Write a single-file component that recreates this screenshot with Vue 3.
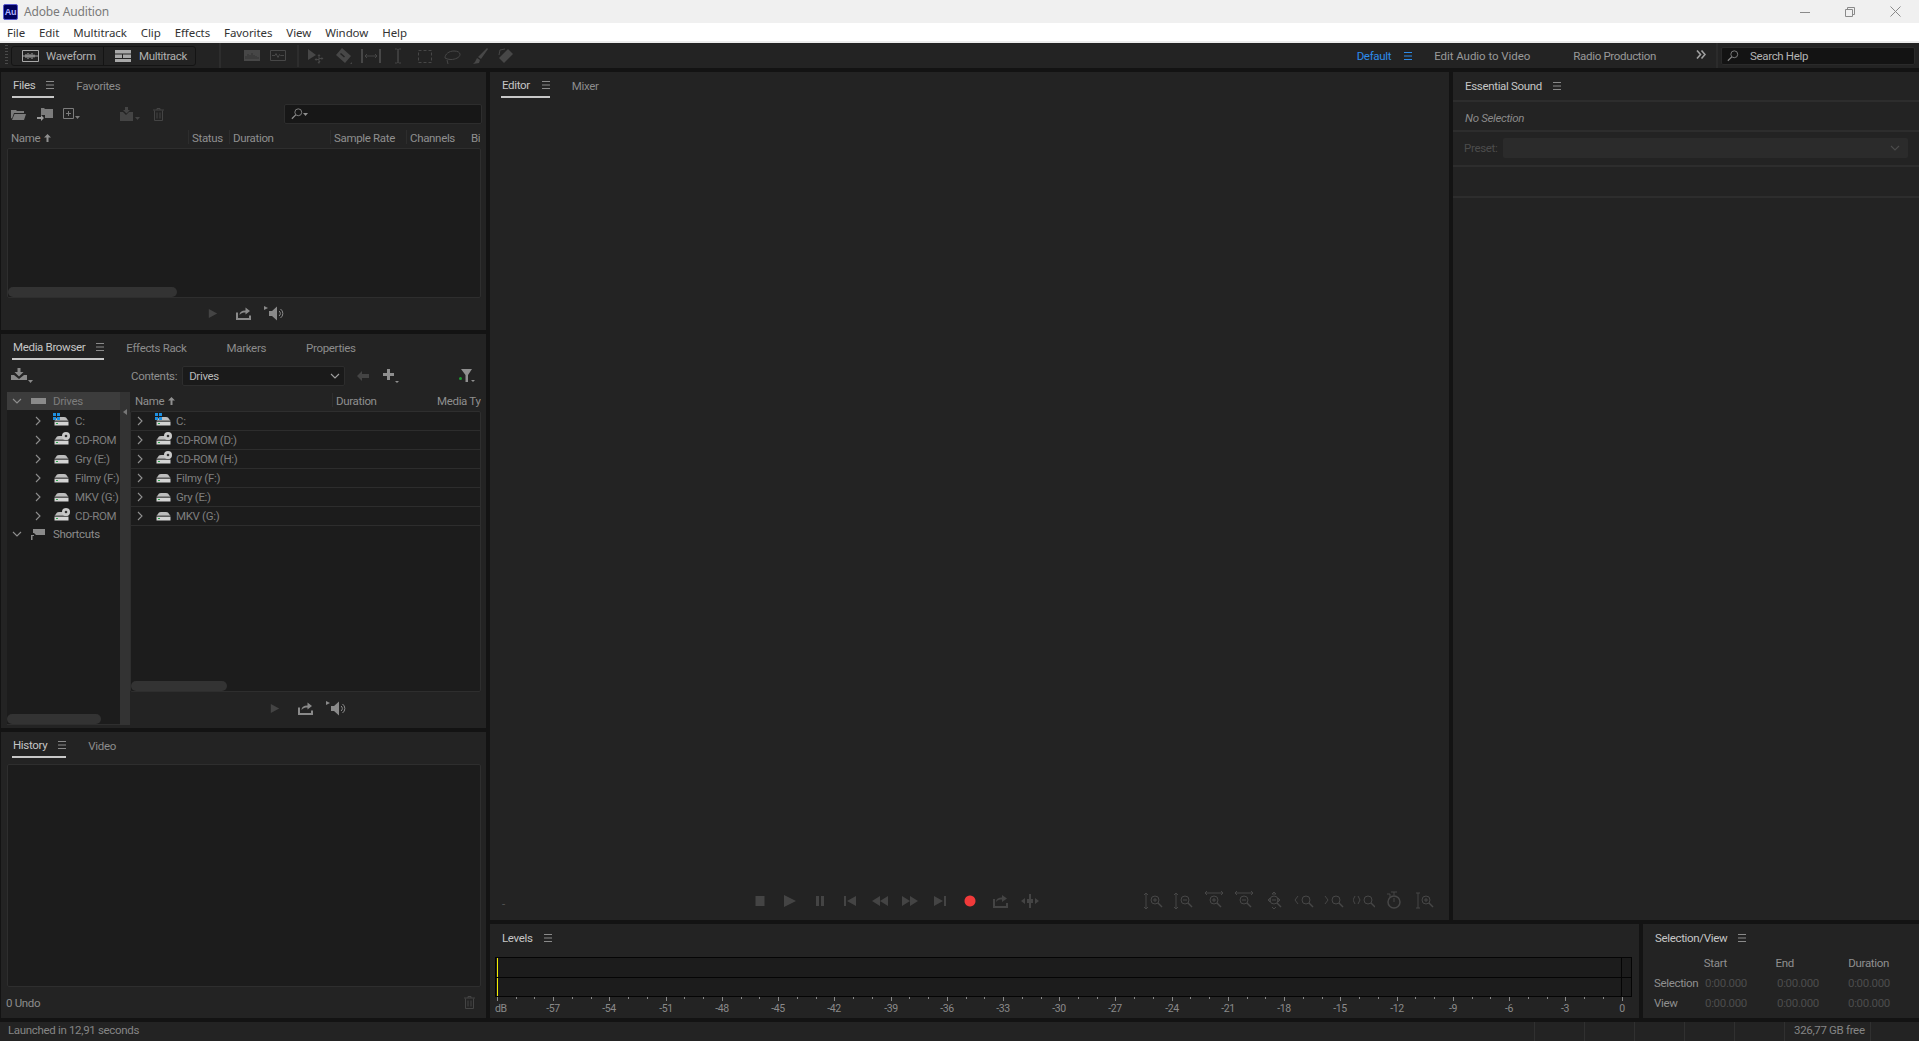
<template>
  <div class="app">
    <svg class="defs" aria-hidden="true">
      <symbol id="burger" viewBox="0 0 8 8"><path d="M0 .5h8M0 4h8M0 7.500h8" stroke="currentColor" fill="none" /></symbol>
      <symbol id="chev-r" viewBox="0 0 8 10"><path d="M2 1l4 4-4 4" stroke="currentColor" stroke-width="1.100" fill="none" /></symbol>
      <symbol id="chev-d" viewBox="0 0 10 8"><path d="M1 2l4 4 4-4" stroke="currentColor" stroke-width="1.100" fill="none" /></symbol>
      <symbol id="drive" viewBox="0 0 15 10">
        <path d="M3 1.500Q3.500 1 5 1h5q1.500 0 2 .5L14.500 5H.5z" fill="#bdbdbd" />
        <path d="M.5 5.500h14V9.500H.5z" fill="#d4d4d4" />
        <path d="M0 5h15" stroke="#333" stroke-width=".8" />
        <path d="M2 7h2v1H2z" fill="#2fa84f" />
      </symbol>
      <symbol id="disc" viewBox="0 0 8 8">
        <circle cx="4" cy="4" r="4" fill="#c9c9c9" />
        <circle cx="4" cy="4" r="1.300" fill="#333" />
      </symbol>
      <symbol id="win" viewBox="0 0 7 7"><path d="M0 0h3v3H0zM4 0h3v3H4zM0 4h3v3H0zM4 4h3v3H4z" fill="#1e8fe0" /></symbol>
      <symbol id="play" viewBox="0 0 12 12"><path d="M1 .5l10 5.500-10 5.500z" fill="currentColor" /></symbol>
      <symbol id="loop" viewBox="0 0 15 13">
        <path d="M1 5.500V12h13V8.500" stroke="currentColor" stroke-width="2" fill="none" />
        <path d="M3.500 8c0-3 2-4.500 6-4.500V.5L14 4 9.500 7.500V5.500C7 5.500 5 6 3.500 8z" fill="currentColor" />
      </symbol>
      <symbol id="speaker" viewBox="0 0 20 15">
        <path d="M0 0l4 2-4 2z" fill="currentColor" />
        <path d="M5 5h3l5-4.500v14L8 10H5z" fill="currentColor" />
        <path d="M15 5a3 3 0 0 1 0 5M16.500 3a5.500 5.500 0 0 1 0 9" stroke="currentColor" fill="none" />
      </symbol>
      <symbol id="caret" viewBox="0 0 5 3"><path d="M0 0h5L2.500 3z" fill="currentColor" /></symbol>
      <symbol id="trash" viewBox="0 0 11 13">
        <path d="M0 2h11M4 2V.5h3V2M1.500 2.500v10h8v-10M4 4.500v6M7 4.500v6" stroke="currentColor" fill="none" />
      </symbol>
      <symbol id="sort-up" viewBox="0 0 7 8"><path d="M3.500 0L7 3.500H4.500V8h-2V3.500H0z" fill="currentColor" /></symbol>
      <symbol id="find" viewBox="0 0 14 14">
        <circle cx="8.500" cy="5" r="4" stroke="currentColor" fill="none" />
        <path d="M5.500 8L1 12.500" stroke="currentColor" stroke-width="1.400" />
      </symbol>
    </svg>

    <header class="titlebar">
      <div class="logo">Au</div>
      <span class="title">Adobe Audition</span>
      <div class="winctl">
        <svg width="10" height="10" viewBox="0 0 10 10"><path d="M0 5.500h10" stroke="#8a8a8a" /></svg>
        <svg width="10" height="10" viewBox="0 0 10 10"><path d="M.5 2.500h7v7h-7zM2.500 2.500V.5h7v7h-2" stroke="#8a8a8a" fill="none" /></svg>
        <svg width="11" height="11" viewBox="0 0 11 11"><path d="M.5.500l10 10M10.500.500l-10 10" stroke="#8a8a8a" /></svg>
      </div>
    </header>

    <nav class="menubar">
      <span v-for="m in menus" :key="m">{{ m }}</span>
    </nav>

    <div class="toolbar">
      <div class="grip"></div>
      <div class="modes">
        <div class="mode">
          <svg width="17" height="12" viewBox="0 0 17 12"><path d="M.5.500h16v11H.5zM1 6h15M4 4v4M6 3v6M8 4v4M10 3v6M12 4.500v3" stroke="#a8a8a8" fill="none" /></svg>
          Waveform
        </div>
        <div class="mode mode-r">
          <svg width="16" height="12" viewBox="0 0 16 12"><path d="M0 0h16v3.500H0zM0 4.500h7V8H0zM8 4.500h8V8H8zM0 9h16v3H0z" fill="#a8a8a8" /></svg>
          Multitrack
        </div>
      </div>
      <div class="tsep first"></div>
      <svg class="tview" width="16" height="11" viewBox="0 0 16 11"><path d="M0 0h16v11H0z" fill="#474747" /><path d="M2 9V6M4 9V4M6 9V5M8 9V3M10 9V5M12 9V6M14 9V7" stroke="#333" /></svg>
      <svg class="tview" width="16" height="11" viewBox="0 0 16 11"><path d="M.5.500h15v10H.5zM2 5.500h3l1-2 2 4 1.500-3 1 1H14" stroke="#474747" fill="none" /></svg>
      <div class="tsep second"></div>
      <div class="tools">
        <svg v-for="(t, i) in tools" :key="i" width="20" height="18" viewBox="0 0 20 18">
          <path v-if="t.fill" :d="t.fill" fill="#474747" fill-rule="evenodd" />
          <path v-if="t.line" :d="t.line" stroke="#474747" fill="none" :stroke-dasharray="t.dash" />
        </svg>
      </div>
      <div class="workspaces">
        <span class="ws-active">Default</span>
        <svg class="ws-burger" width="8" height="8"><use href="#burger" /></svg>
        <span class="ws ws-edit">Edit Audio to Video</span>
        <span class="ws ws-radio">Radio Production</span>
        <svg class="more" width="10" height="9" viewBox="0 0 10 9"><path d="M1 .5l3.500 4L1 8.500M5.500 .5l3.500 4-3.500 4" stroke="#a0a0a0" stroke-width="1.600" fill="none" /></svg>
        <div class="tsep help"></div>
        <div class="searchhelp">
          <svg width="12" height="12"><use href="#find" /></svg>
          <span>Search Help</span>
        </div>
      </div>
    </div>

    <main class="workspace">
      <section class="leftcol">
        <div class="panel files">
          <div class="tabs">
            <div class="tab on">Files<svg width="8" height="8"><use href="#burger" /></svg></div>
            <div class="tab next">Favorites</div>
          </div>
          <div class="files-tools">
            <svg class="ic11" width="15" height="11" viewBox="0 0 15 11"><path d="M0 1h5l1 1h7v2H3L1 9.500 0 9zM3.500 5H15l-2 6H1z" fill="#7c7c7c" /></svg>
            <svg class="ic11 s2" width="17" height="13" viewBox="0 0 17 13"><path d="M4 0h3l1 1h8v9H8V7H4z" fill="#7c7c7c" /><path d="M0 9h4V7l3 3-3 3v-2H0z" fill="#9a9a9a" /></svg>
            <svg class="ic11 s3" width="17" height="12" viewBox="0 0 17 12"><path d="M.5.500h10v10H.5zM5.500 3v5M3 5.500h5" stroke="#7c7c7c" fill="none" /><path d="M12 8h5l-2.500 3z" fill="#7c7c7c" /></svg>
            <svg class="ic11 s4" width="20" height="14" viewBox="0 0 20 14"><path d="M5 0h3v3h2L6.500 6.500 3 3h2zM0 5h3l3 3 3-3h4v9H0z" fill="#444" /><path d="M15 10h5l-2.500 3z" fill="#444" /></svg>
            <svg class="ic11 s5" width="11" height="13"><use href="#trash" color="#444" /></svg>
            <div class="searchbox">
              <svg width="12" height="12"><use href="#find" color="#8f8f8f" /></svg>
              <svg width="5" height="3"><use href="#caret" color="#8f8f8f" /></svg>
            </div>
          </div>
          <div class="thead files-head">
            <span class="c-name">Name <svg width="7" height="8"><use href="#sort-up" /></svg></span>
            <span class="c-status">Status</span>
            <span class="c-dur">Duration</span>
            <span class="c-rate">Sample Rate</span>
            <span class="c-chan">Channels</span>
            <span class="c-bit">Bi</span>
          </div>
          <div class="listbox grow">
            <div class="thumb files-thumb"></div>
          </div>
          <div class="players files-players">
            <svg width="10" height="11"><use href="#play" color="#444" /></svg>
            <svg width="15" height="13"><use href="#loop" color="#8a8a8a" /></svg>
            <svg width="20" height="15"><use href="#speaker" color="#8a8a8a" /></svg>
          </div>
        </div>

        <div class="panel media">
          <div class="tabs">
            <div class="tab on">Media Browser<svg width="8" height="8"><use href="#burger" /></svg></div>
            <div class="tab next">Effects Rack</div>
            <div class="tab later">Markers</div>
            <div class="tab later">Properties</div>
          </div>
          <div class="media-tools">
            <svg class="ingest" width="22" height="15" viewBox="0 0 22 15"><path d="M6.500 0h3v4h3L8 8.500 3.500 4h3zM0 7h3l5 4 5-4h3v5H0z" fill="#8a8a8a" /><path d="M17 12h5l-2.500 3z" fill="#8a8a8a" /></svg>
            <span class="contents">Contents:</span>
            <div class="select">
              <span>Drives</span>
              <svg width="10" height="8"><use href="#chev-d" /></svg>
            </div>
            <svg class="back" width="12" height="10" viewBox="0 0 12 10"><path d="M0 5l5-5v3h7v4H5v3z" fill="#444" /></svg>
            <svg class="plus" width="16" height="14" viewBox="0 0 16 14"><path d="M4 0h3v4h4v3H7v4H4V7H0V4h4z" fill="#8f8f8f" /><path d="M12 12h4l-2 2z" fill="#8f8f8f" /></svg>
            <svg class="filter" width="16" height="14" viewBox="0 0 16 14"><circle cx="1.500" cy="9.500" r="1.500" fill="#1f9a32" /><path d="M2 0h11L9 6v7H6.500V6z" fill="#8f8f8f" /><path d="M12 11h4l-2 2z" fill="#8f8f8f" /></svg>
          </div>
          <div class="browser">
            <div class="tree">
              <div class="root sel">
                <svg class="cd" width="10" height="8"><use href="#chev-d" /></svg>
                <svg class="rooticon" width="15" height="6" viewBox="0 0 15 6"><path d="M0 0h15v6H0z" fill="#8a8a8a" /></svg>
                <span>Drives</span>
              </div>
              <div v-for="d in treeDrives" :key="d.key" class="item">
                <svg class="cr" width="8" height="10"><use href="#chev-r" /></svg>
                <span class="drive-ic">
                  <svg class="d" width="15" height="10"><use href="#drive" /></svg>
                  <svg v-if="d.win" class="w" width="7" height="7"><use href="#win" /></svg>
                  <svg v-if="d.disc" class="c" width="8" height="8"><use href="#disc" /></svg>
                </span>
                <span>{{ d.name }}</span>
              </div>
              <div class="root">
                <svg class="cd" width="10" height="8"><use href="#chev-d" /></svg>
                <svg class="rooticon sc" width="14" height="11" viewBox="0 0 14 11"><path d="M2 0h12v6H5L3 4H2zM0 6h3v1H1.500v4H0z" fill="#8a8a8a" /></svg>
                <span>Shortcuts</span>
              </div>
              <div class="thumb tree-thumb"></div>
            </div>
            <div class="splitter">
              <svg class="sp-arrow" width="4" height="6" viewBox="0 0 4 6"><path d="M4 0v6L0 3z" fill="#777" /></svg>
              <div class="sp-dots"></div>
            </div>
            <div class="listcol">
              <div class="thead media-head">
                <span class="m-name">Name <svg width="7" height="8"><use href="#sort-up" /></svg></span>
                <span class="m-dur">Duration</span>
                <span class="m-type">Media Ty</span>
              </div>
              <div class="listbox grow">
                <div v-for="d in listDrives" :key="d.name" class="row">
                  <svg class="cr" width="8" height="10"><use href="#chev-r" /></svg>
                  <span class="drive-ic">
                    <svg class="d" width="15" height="10"><use href="#drive" /></svg>
                    <svg v-if="d.win" class="w" width="7" height="7"><use href="#win" /></svg>
                    <svg v-if="d.disc" class="c" width="8" height="8"><use href="#disc" /></svg>
                  </span>
                  <span>{{ d.name }}</span>
                </div>
                <div class="thumb list-thumb"></div>
              </div>
              <div class="players media-players">
                <svg width="10" height="11"><use href="#play" color="#444" /></svg>
                <svg width="15" height="13"><use href="#loop" color="#8a8a8a" /></svg>
                <svg width="20" height="15"><use href="#speaker" color="#8a8a8a" /></svg>
              </div>
            </div>
          </div>
        </div>

        <div class="panel history">
          <div class="tabs">
            <div class="tab on">History<svg width="8" height="8"><use href="#burger" /></svg></div>
            <div class="tab next">Video</div>
          </div>
          <div class="listbox grow history-box"></div>
          <div class="undo">
            <span>0 Undo</span>
            <svg width="11" height="13"><use href="#trash" color="#444" /></svg>
          </div>
        </div>
      </section>

      <section class="rightarea">
        <div class="toprow">
          <div class="panel editor">
            <div class="tabs">
              <div class="tab on">Editor<svg width="8" height="8"><use href="#burger" /></svg></div>
              <div class="tab next">Mixer</div>
            </div>
            <div class="canvas"></div>
            <div class="transport">
              <span class="dash">-</span>
              <div class="slots tp">
                <svg v-for="(t, i) in transport" :key="i" width="20" height="14" viewBox="0 0 20 14">
                  <path v-if="t.fill" :d="t.fill" :fill="t.color || '#444'" />
                  <path v-if="t.line" :d="t.line" stroke="#444" stroke-width="2" fill="none" />
                </svg>
              </div>
              <div class="slots zm">
                <svg v-for="(z, i) in zooms" :key="i" width="22" height="20" viewBox="0 0 22 20">
                  <circle :cx="z.cx" :cy="z.cy || 9" :r="z.r || 4" stroke="#474747" :stroke-width="z.r ? 1.500 : 1" fill="none" />
                  <path v-if="!z.r" :d="`M${z.cx + 3} 12l4 4`" stroke="#474747" stroke-width="1.500" />
                  <path :d="z.d" stroke="#474747" fill="none" />
                </svg>
              </div>
            </div>
          </div>
          <div class="panel essential">
            <div class="tabs es-tabs">
              <div class="tab plain">Essential Sound<svg width="8" height="8"><use href="#burger" /></svg></div>
            </div>
            <div class="es-none">No Selection</div>
            <div class="es-preset">
              <span>Preset:</span>
              <div class="es-select"><svg width="10" height="8"><use href="#chev-d" /></svg></div>
            </div>
            <div class="es-empty"></div>
          </div>
        </div>

        <div class="bottomrow">
          <div class="panel levels">
            <div class="tabs flat">
              <div class="tab plain">Levels<svg width="8" height="8"><use href="#burger" /></svg></div>
            </div>
            <div class="meter">
              <div class="m-ch"><i class="peak"></i><b></b></div>
              <div class="m-ch"><i class="peak"></i><b></b></div>
            </div>
            <div class="ruler">
              <i v-for="t in ticks" :key="t.x" :class="{ major: t.major }" :style="{ left: t.x + 'px' }"></i>
              <span v-for="l in labels" :key="l.text" :style="{ left: l.x + 'px' }">{{ l.text }}</span>
            </div>
          </div>
          <div class="panel selview">
            <div class="tabs flat">
              <div class="tab plain">Selection/View<svg width="8" height="8"><use href="#burger" /></svg></div>
            </div>
            <div class="sv-grid">
              <span></span><span class="h h1">Start</span><span class="h h2">End</span><span class="h h3">Duration</span>
              <span>Selection</span><span class="v">0:00.000</span><span class="v">0:00.000</span><span class="v">0:00.000</span>
              <span>View</span><span class="v">0:00.000</span><span class="v">0:00.000</span><span class="v">0:00.000</span>
            </div>
          </div>
        </div>
      </section>
    </main>

    <footer class="statusbar">
      <span class="launched">Launched in 12,91 seconds</span>
      <div class="cells">
        <i></i><i></i><i></i><i></i><i></i>
        <span>326,77 GB free</span>
      </div>
    </footer>
  </div>
</template>

<script setup>
const menus = ['File', 'Edit', 'Multitrack', 'Clip', 'Effects', 'Favorites', 'View', 'Window', 'Help']

const tools = [
  { fill: 'M1 2l8 6-8 5zM12 7l1.500 2h-1v2h2v-1l2 1.500-2 1.500v-1h-2v2h1L12 17l-1.500-2h1v-2h-2v1l-2-1.500 2-1.500v1h2V9h-1z' },
  { fill: 'M2 8l6-7 9 8-6 7zM7 6L6 7l4 3.500 1-1zM18 15v2h-2z' },
  { fill: 'M0 2h2v14H0zM18 2h2v14h-2z', line: 'M4 9h12M6 7L4 9l2 2M14 7l2 2-2 2' },
  { line: 'M7 2h1.500q1.500 0 1.500 1.500v11q0 1.500 1.500 1.500H13M13 2h-1.500q-1.500 0-1.500 1.500v11q0 1.500-1.500 1.500H7' },
  { line: 'M3.500 3.500h13v12h-13z', dash: '3 2' },
  { line: 'M3 11c0-4 4-7 9-7 4 0 6 1.500 6 3.500 0 3-5 5-9 5-3 0-5-1-6-1.500M5 13l1 4' },
  { fill: 'M18 1l1 1-7 10-3-2zM8 11l3 2-1 3-6 1 2-2z' },
  { fill: 'M12 2l5 5-9 9-5-5z', line: 'M3 8l1-5 5-1' },
]

const transport = [
  { fill: 'M5.500 2h9v10h-9z' },
  { fill: 'M4 1l12 6-12 6z' },
  { fill: 'M6 2h3v10H6zM11 2h3v10h-3z' },
  { fill: 'M4 2h2v10H4zM16 2v10L7 7z' },
  { fill: 'M2 7l8-5v10zM10 7l8-5v10z' },
  { fill: 'M2 2l8 5-8 5zM10 2l8 5-8 5z' },
  { fill: 'M4 2l9 5-9 5zM14 2h2v10h-2z' },
  { fill: 'M10 1.500a5.500 5.500 0 1 0 .01 0z', color: '#f03a3a' },
  { fill: 'M6 8c0-3 2-4.500 6-4.500V1l5 3.500L12 8V5.500C9.500 5.500 7.500 6 6 8z', line: 'M4 5v8h13V9' },
  { fill: 'M1 7l4-3v6zM19 7l-4-3v6zM7 5h6v4H7z', line: 'M10 0v14' },
]

const zooms = [
  { cx: 12, d: 'M3 2v16M1 4l2-2 2 2M1 16l2 2 2-2M10 9h4M12 7v4' },
  { cx: 12, d: 'M3 2v16M1 4l2-2 2 2M1 16l2 2 2-2M10 9h4' },
  { cx: 11, d: 'M2 2h18M4 0L2 2l2 2M18 0l2 2-2 2M9 9h4M11 7v4' },
  { cx: 11, d: 'M2 2h18M4 0L2 2l2 2M18 0l2 2-2 2M9 9h4' },
  { cx: 11, d: 'M5 9l2-2v4zM17 9l-2-2v4zM11 1l2 2H9zM9 9h4M9 16l2 2 2-2' },
  { cx: 13, d: 'M5 5L2 9l3 4' },
  { cx: 13, d: 'M2 5l3 4-3 4' },
  { cx: 15, d: 'M2 5L0 9l2 4M5 5l2 4-2 4' },
  { cx: 11, cy: 11, r: 6, d: 'M8 1h6M11 1v3M4 3l3 0 0 3M11 11V7' },
  { cx: 13, d: 'M3 2h4M5 2v15M3 17h4M11 9h4M13 7v4' },
]

const treeDrives = [
  { key: 'c', name: 'C:', win: true },
  { key: 'd', name: 'CD-ROM', disc: true },
  { key: 'e', name: 'Gry (E:)' },
  { key: 'f', name: 'Filmy (F:)' },
  { key: 'g', name: 'MKV (G:)' },
  { key: 'h', name: 'CD-ROM', disc: true },
]

const listDrives = [
  { name: 'C:', win: true },
  { name: 'CD-ROM (D:)', disc: true },
  { name: 'CD-ROM (H:)', disc: true },
  { name: 'Filmy (F:)' },
  { name: 'Gry (E:)' },
  { name: 'MKV (G:)' },
]

// one tick per dB, -60 to 0, every third one is a major tick
const step = 1124.5 / 60
const ticks = Array.from({ length: 61 }, (_, i) => ({ x: Math.round(i * step), major: i % 3 === 0 }))
const labels = Array.from({ length: 21 }, (_, i) => ({
  x: Math.round(i * step * 3),
  text: i === 0 ? 'dB' : String(-60 + i * 3),
}))
</script>

<style>
html, body {
  margin: 0;
  background: #131313;
  overflow: hidden;
}
</style>

<style scoped>
.app {
  width: 1919px;
  height: 1041px;
  display: flex;
  flex-direction: column;
  background: #131313;
  font-family: Roboto, "Liberation Sans", sans-serif;
  font-size: 11.5px;
  letter-spacing: -0.33px;
  color: #8c8c8c;
}
.defs {
  position: absolute;
  width: 0;
  height: 0;
}
svg {
  flex: none;
  display: block;
}

.titlebar {
  height: 23px;
  flex: none;
  background: #f0f0f0;
  display: flex;
  align-items: center;
  font-family: "Noto Sans", sans-serif;
  font-size: 12px;
  letter-spacing: -0.15px;
  color: #7a7a7a;
}
.logo {
  width: 15px;
  height: 16px;
  margin-left: 3px;
  box-sizing: border-box;
  background: #00005b;
  border: 1px solid #5a5ad0;
  border-radius: 2px;
  color: #b0b0ff;
  font-size: 9px;
  font-weight: 700;
  line-height: 14px;
  text-align: center;
  font-family: "Liberation Sans", sans-serif;
}
.title {
  margin-left: 6px;
}
.winctl {
  margin-left: auto;
  margin-right: 18px;
  display: flex;
  align-items: center;
  gap: 35px;
}

.menubar {
  height: 18px;
  flex: none;
  background: #fff;
  border-bottom: 2px solid #ececec;
  display: flex;
  align-items: center;
  gap: 14px;
  padding-left: 7px;
  font-family: "Noto Sans", sans-serif;
  font-size: 11.5px;
  letter-spacing: -0.09px;
  color: #333;
}

.toolbar {
  height: 25px;
  flex: none;
  background: #232323;
  display: flex;
  align-items: center;
}
.grip {
  width: 3px;
  height: 21px;
  margin-left: 5px;
  background: repeating-linear-gradient(#4a4a4a 0 1px, transparent 1px 3px);
}
.modes {
  display: flex;
  height: 20px;
  margin-left: 3px;
  box-sizing: border-box;
  border: 1px solid #141414;
  border-radius: 3px;
  color: #b0b0b0;
}
.mode {
  display: flex;
  align-items: center;
  gap: 7px;
  padding: 0 6px 0 10px;
  width: 91px;
  box-sizing: border-box;
}
.mode-r {
  border-left: 1px solid #141414;
  width: 92px;
  padding-left: 11px;
  gap: 8px;
}
.tsep {
  width: 2px;
  height: 25px;
  background: #2d2d2d;
  flex: none;
}
.tsep.first {
  margin-left: 23px;
}
.tview {
  margin-left: 10px;
}
.tsep.first + .tview {
  margin-left: 23px;
}
.tsep.second {
  margin-left: 11px;
  height: 22px;
}
.tools {
  display: flex;
  gap: 7px;
  margin-left: 8px;
}
.workspaces {
  margin-left: auto;
  display: flex;
  align-items: center;
  height: 100%;
}
.ws-active {
  color: #2d8ceb;
}
.ws-burger {
  color: #2d8ceb;
  margin-left: 13px;
}
.ws {
  color: #999;
}
.ws-edit {
  margin-left: 22px;
  letter-spacing: -0.05px;
}
.ws-radio {
  margin-left: 43px;
}
.more {
  margin-left: 40px;
  margin-top: -2px;
}
.tsep.help {
  margin-left: 10px;
  background: #2b2b2b;
}
.searchhelp {
  width: 194px;
  height: 18px;
  box-sizing: border-box;
  margin: 1px 4px 0 3px;
  background: #131313;
  border: 1px solid #2a2a2a;
  border-radius: 2px;
  display: flex;
  align-items: center;
  padding-left: 5px;
  gap: 11px;
  color: #b4b4b4;
}
.searchhelp svg {
  color: #8a8a8a;
}

.workspace {
  flex: 1;
  display: grid;
  grid-template-columns: 485px 1fr;
  gap: 4px;
  padding: 4px 0 2px 1px;
  min-height: 0;
}
.leftcol {
  display: grid;
  grid-template-rows: 258px 394px 286px;
  gap: 4px;
  min-height: 0;
}
.rightarea {
  display: grid;
  grid-template-rows: 848px 94px;
  gap: 4px;
  min-width: 0;
}
.toprow {
  display: grid;
  grid-template-columns: 959px 1fr;
  gap: 4px;
  min-height: 0;
}
.bottomrow {
  display: grid;
  grid-template-columns: 1149px 1fr;
  gap: 4px;
}
.panel {
  background: #232323;
  display: flex;
  flex-direction: column;
  min-height: 0;
  min-width: 0;
  position: relative;
}

.tabs {
  height: 26px;
  flex: none;
  display: flex;
  padding-left: 11px;
}
.tab {
  display: flex;
  align-items: center;
  gap: 11px;
  height: 26px;
  box-sizing: border-box;
  white-space: nowrap;
  padding-top: 2px;
  color: #8c8c8c;
}
.tab.on {
  color: #c6c6c6;
  border-bottom: 2px solid #c8c8c8;
  padding-left: 1px;
}
.editor .tab.on {
  gap: 12px;
}
.tab.plain {
  color: #c6c6c6;
}
.tab svg {
  color: #8a8a8a;
}
.tab.next {
  margin-left: 22px;
}
.tab.later {
  margin-left: 40px;
}
.es-tabs {
  box-sizing: border-box;
  height: 30px;
  border-bottom: 2px solid #2d2d2d;
  padding-left: 12px;
}
.flat {
  padding-left: 12px;
}

.files-tools {
  height: 30px;
  flex: none;
  box-sizing: border-box;
  padding-top: 2px;
  display: flex;
  align-items: center;
}
.files-tools .ic11 {
  margin-left: 10px;
}
.files-tools .s2 {
  margin-left: 11px;
}
.files-tools .s3 {
  margin-left: 9px;
}
.files-tools .s4 {
  margin-left: 40px;
}
.files-tools .s5 {
  margin-left: 13px;
}
.searchbox {
  margin-left: 120px;
  width: 198px;
  height: 20px;
  box-sizing: border-box;
  background: #171717;
  border: 1px solid #2d2d2d;
  border-radius: 2px;
  display: flex;
  align-items: center;
  padding-left: 6px;
}

.thead {
  display: flex;
  align-items: center;
  height: 20px;
  flex: none;
  position: relative;
  color: #8f8f8f;
}
.thead span {
  position: absolute;
  top: 3px;
  white-space: nowrap;
  display: flex;
  align-items: center;
  gap: 4px;
}
.thead span + span::before {
  content: "";
  position: absolute;
  left: -4px;
  top: -1px;
  height: 14px;
  width: 1px;
  background: #2d2d2d;
}
.c-name { left: 10px; }
.c-status { left: 191px; }
.c-dur { left: 232px; }
.c-rate { left: 333px; }
.c-chan { left: 409px; }
.c-bit { left: 470px; width: 9px; overflow: hidden; }
.m-name { left: 5px; }
.m-dur { left: 206px; }
.m-type { left: 307px; width: 44px; overflow: hidden; }
.m-type::before { display: none; }

.listbox {
  margin: 0 5px 0 6px;
  background: #1c1c1c;
  border: 1px solid #2e2e2e;
  border-radius: 2px;
  position: relative;
  overflow: hidden;
}
.grow {
  flex: 1;
  min-height: 0;
}
.thumb {
  position: absolute;
  left: 0;
  height: 10px;
  background: #333;
  border-radius: 5px;
  bottom: 0;
}
.files-thumb { width: 169px; }
.list-thumb { width: 96px; }
.tree-thumb { width: 94px; }

.players {
  height: 32px;
  flex: none;
  display: flex;
  align-items: center;
  padding-left: 207px;
}
.files-players {
  box-sizing: border-box;
  padding-bottom: 2px;
}
.players svg:nth-child(2) {
  margin-left: 18px;
}
.players svg:nth-child(3) {
  margin-left: 13px;
}
.media-players {
  height: 33px;
  padding-left: 140px;
}

.media-tools {
  height: 32px;
  flex: none;
  display: flex;
  align-items: center;
  padding-bottom: 1px;
  box-sizing: border-box;
}
.ingest {
  margin-left: 10px;
}
.contents {
  margin-left: 98px;
  color: #8f8f8f;
}
.select {
  margin-left: 5px;
  width: 163px;
  height: 20px;
  box-sizing: border-box;
  background: #1a1a1a;
  border: 1px solid #2d2d2d;
  border-radius: 2px;
  display: flex;
  align-items: center;
  justify-content: space-between;
  padding: 0 4px 0 6px;
  color: #b8b8b8;
}
.select svg {
  color: #a0a0a0;
}
.back {
  margin-left: 12px;
}
.plus {
  margin-left: 14px;
}
.filter {
  margin-left: 60px;
}

.browser {
  flex: 1;
  display: flex;
  min-height: 0;
  padding: 0 5px 3px 6px;
}
.tree {
  width: 113px;
  flex: none;
  background: #1c1c1c;
  position: relative;
  overflow: hidden;
  border-bottom: 1px solid #2e2e2e;
  box-sizing: border-box;
  white-space: nowrap;
}
.root {
  height: 18px;
  display: flex;
  align-items: center;
  padding-left: 5px;
}
.root.sel {
  background: #3c3c3c;
  color: #7d7d7d;
}
.rooticon {
  margin-left: 9px;
  margin-right: 7px;
}
.rooticon.sc {
  margin-right: 8px;
}
.item {
  height: 19px;
  display: flex;
  align-items: center;
  padding-left: 27px;
  color: #7f7f7f;
}
.item .drive-ic {
  margin-left: 12px;
  margin-right: 6px;
}
.root + .item {
  margin-top: 1px;
}
.cr,
.cd {
  color: #8f8f8f;
}
.drive-ic {
  width: 15px;
  height: 14px;
  position: relative;
  flex: none;
}
.drive-ic .d {
  position: absolute;
  left: 0;
  bottom: 2px;
}
.drive-ic .w {
  position: absolute;
  left: -1px;
  top: -1px;
}
.drive-ic .c {
  position: absolute;
  right: -1px;
  top: -1px;
}
.splitter {
  width: 10px;
  flex: none;
  background: #333;
  position: relative;
}
.sp-arrow {
  position: absolute;
  left: 3px;
  top: 17px;
}
.sp-dots {
  position: absolute;
  left: 4px;
  top: 153px;
  width: 3px;
  height: 27px;
  background-image: radial-gradient(#6a6a6a 0.6px, transparent 0.7px);
  background-size: 2px 2px;
}
.listcol {
  flex: 1;
  display: flex;
  flex-direction: column;
  min-width: 0;
}
.listcol .listbox {
  margin: 0;
}
.media-head {
  height: 19px;
}
.media-head span {
  top: 2px;
}
.row {
  height: 19px;
  box-sizing: border-box;
  border-bottom: 1px solid #2d2d2d;
  display: flex;
  align-items: center;
  padding-left: 5px;
  color: #7f7f7f;
}
.row .drive-ic {
  margin-left: 12px;
  margin-right: 5px;
}

.history-box {
  flex: 1;
  margin-top: 6px;
}
.undo {
  height: 31px;
  flex: none;
  display: flex;
  align-items: center;
  justify-content: space-between;
  padding: 0 11px 0 5px;
}

.canvas {
  flex: 1;
}
.transport {
  height: 38px;
  flex: none;
  display: flex;
  align-items: center;
  position: relative;
}
.dash {
  position: absolute;
  left: 12px;
  top: 15px;
  color: #555;
}
.slots {
  display: flex;
  gap: 10px;
}
.tp {
  margin-left: 260px;
}
.zm {
  margin-left: 103px;
  gap: 8px;
}
.es-none {
  height: 30px;
  flex: none;
  box-sizing: border-box;
  padding: 4px 0 0 12px;
  display: flex;
  align-items: center;
  font-style: italic;
  color: #8a8a8a;
  border-bottom: 2px solid #2d2d2d;
}
.es-preset {
  height: 35px;
  flex: none;
  box-sizing: border-box;
  padding-bottom: 1px;
  display: flex;
  align-items: center;
  padding-left: 11px;
  gap: 6px;
  color: #4c4c4c;
  border-bottom: 2px solid #2d2d2d;
}
.es-select {
  width: 405px;
  height: 20px;
  background: #2b2b2b;
  border-radius: 2px;
  display: flex;
  align-items: center;
  justify-content: flex-end;
  padding-right: 8px;
  box-sizing: border-box;
  color: #4c4c4c;
}
.es-empty {
  height: 31px;
  flex: none;
  box-sizing: border-box;
  border-bottom: 2px solid #2d2d2d;
}

.meter {
  margin: 7px 0 0 5px;
  width: 1137px;
  height: 40px;
  flex: none;
  box-sizing: border-box;
  border: 1px solid #050505;
  background: #1c1c1c;
  display: flex;
  flex-direction: column;
}
.m-ch {
  flex: 1;
  position: relative;
}
.m-ch + .m-ch {
  border-top: 1px solid #050505;
}
.m-ch .peak {
  position: absolute;
  left: 1px;
  top: 0;
  bottom: 0;
  width: 1px;
  background: #f4ee00;
}
.m-ch b {
  position: absolute;
  right: 9px;
  top: 0;
  bottom: 0;
  width: 1px;
  background: #050505;
}
.ruler {
  position: relative;
  margin-left: 7px;
  height: 20px;
  color: #8a8a8a;
  font-size: 10.5px;
}
.ruler i {
  position: absolute;
  top: 0;
  width: 1px;
  height: 2px;
  background: #8a8a8a;
}
.ruler i.major {
  height: 4px;
}
.ruler span {
  position: absolute;
  top: 5px;
  transform: translateX(-50%);
  white-space: nowrap;
}
.ruler span:first-of-type {
  transform: translateX(-2px);
}

.sv-grid {
  display: grid;
  grid-template-columns: 46px 47px 72px 71px;
  grid-template-rows: 19px 21px 20px;
  margin: 3px 0 0 11px;
  align-items: center;
  color: #8f8f8f;
}
.sv-grid .h {
  text-align: right;
}
.h1 { padding-right: 20px; }
.h2 { padding-right: 25px; }
.h3 { padding-right: 1px; }
.sv-grid .v {
  text-align: right;
  color: #4c4c4c;
}

.statusbar {
  height: 19px;
  flex: none;
  box-sizing: border-box;
  background: #232323;
  display: flex;
  align-items: center;
  justify-content: space-between;
  padding: 0 0 3px 8px;
  color: #858585;
}
.cells {
  display: flex;
  align-items: stretch;
  height: 19px;
  margin-top: 3px;
  margin-right: 48px;
}
.cells i {
  width: 49px;
  border-left: 1px solid #303030;
}
.cells span {
  width: 87px;
  box-sizing: border-box;
  padding: 1px 0 0 9px;
  border-left: 1px solid #303030;
  border-right: 1px solid #303030;
  white-space: nowrap;
}
</style>
